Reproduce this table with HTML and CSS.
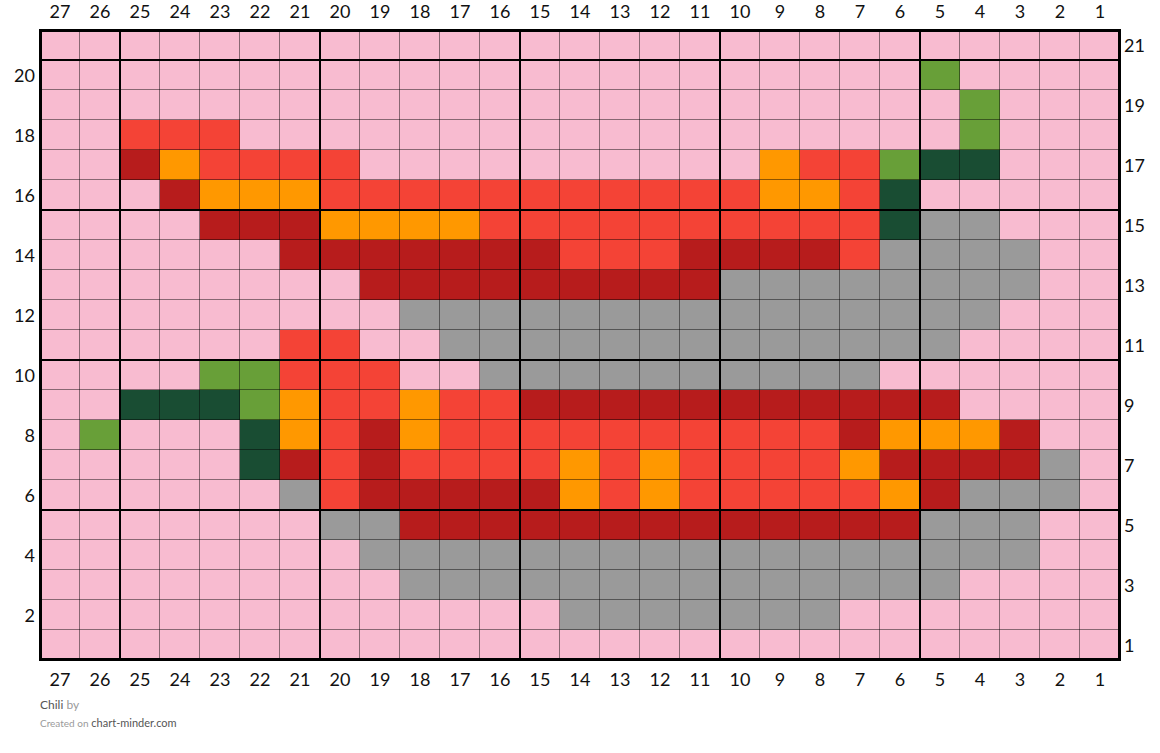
FILE: index.html
```html
<!DOCTYPE html>
<html lang="en">
<head>
<meta charset="utf-8">
<title>Chili</title>
<link rel="stylesheet" href="styles.css">
</head>
<body>
<div class="page">
  <div class="cols">
    <span>27</span><span>26</span><span>25</span><span>24</span><span>23</span><span>22</span><span>21</span><span>20</span><span>19</span><span>18</span><span>17</span><span>16</span><span>15</span><span>14</span><span>13</span><span>12</span><span>11</span><span>10</span><span>9</span><span>8</span><span>7</span><span>6</span><span>5</span><span>4</span><span>3</span><span>2</span><span>1</span>
  </div>
  <div class="middle">
    <div class="rows rows-left">
      <span></span><span>20</span><span></span><span>18</span><span></span><span>16</span><span></span><span>14</span><span></span><span>12</span><span></span><span>10</span><span></span><span>8</span><span></span><span>6</span><span></span><span>4</span><span></span><span>2</span><span></span>
    </div>
    <div class="chart">
<!-- 21 --><i class="p"></i><i class="p"></i><i class="p"></i><i class="p"></i><i class="p"></i><i class="p"></i><i class="p"></i><i class="p"></i><i class="p"></i><i class="p"></i><i class="p"></i><i class="p"></i><i class="p"></i><i class="p"></i><i class="p"></i><i class="p"></i><i class="p"></i><i class="p"></i><i class="p"></i><i class="p"></i><i class="p"></i><i class="p"></i><i class="p"></i><i class="p"></i><i class="p"></i><i class="p"></i><i class="p"></i>
<!-- 20 --><i class="p"></i><i class="p"></i><i class="p"></i><i class="p"></i><i class="p"></i><i class="p"></i><i class="p"></i><i class="p"></i><i class="p"></i><i class="p"></i><i class="p"></i><i class="p"></i><i class="p"></i><i class="p"></i><i class="p"></i><i class="p"></i><i class="p"></i><i class="p"></i><i class="p"></i><i class="p"></i><i class="p"></i><i class="p"></i><i class="l"></i><i class="p"></i><i class="p"></i><i class="p"></i><i class="p"></i>
<!-- 19 --><i class="p"></i><i class="p"></i><i class="p"></i><i class="p"></i><i class="p"></i><i class="p"></i><i class="p"></i><i class="p"></i><i class="p"></i><i class="p"></i><i class="p"></i><i class="p"></i><i class="p"></i><i class="p"></i><i class="p"></i><i class="p"></i><i class="p"></i><i class="p"></i><i class="p"></i><i class="p"></i><i class="p"></i><i class="p"></i><i class="p"></i><i class="l"></i><i class="p"></i><i class="p"></i><i class="p"></i>
<!-- 18 --><i class="p"></i><i class="p"></i><i class="r"></i><i class="r"></i><i class="r"></i><i class="p"></i><i class="p"></i><i class="p"></i><i class="p"></i><i class="p"></i><i class="p"></i><i class="p"></i><i class="p"></i><i class="p"></i><i class="p"></i><i class="p"></i><i class="p"></i><i class="p"></i><i class="p"></i><i class="p"></i><i class="p"></i><i class="p"></i><i class="p"></i><i class="l"></i><i class="p"></i><i class="p"></i><i class="p"></i>
<!-- 17 --><i class="p"></i><i class="p"></i><i class="d"></i><i class="o"></i><i class="r"></i><i class="r"></i><i class="r"></i><i class="r"></i><i class="p"></i><i class="p"></i><i class="p"></i><i class="p"></i><i class="p"></i><i class="p"></i><i class="p"></i><i class="p"></i><i class="p"></i><i class="p"></i><i class="o"></i><i class="r"></i><i class="r"></i><i class="l"></i><i class="k"></i><i class="k"></i><i class="p"></i><i class="p"></i><i class="p"></i>
<!-- 16 --><i class="p"></i><i class="p"></i><i class="p"></i><i class="d"></i><i class="o"></i><i class="o"></i><i class="o"></i><i class="r"></i><i class="r"></i><i class="r"></i><i class="r"></i><i class="r"></i><i class="r"></i><i class="r"></i><i class="r"></i><i class="r"></i><i class="r"></i><i class="r"></i><i class="o"></i><i class="o"></i><i class="r"></i><i class="k"></i><i class="p"></i><i class="p"></i><i class="p"></i><i class="p"></i><i class="p"></i>
<!-- 15 --><i class="p"></i><i class="p"></i><i class="p"></i><i class="p"></i><i class="d"></i><i class="d"></i><i class="d"></i><i class="o"></i><i class="o"></i><i class="o"></i><i class="o"></i><i class="r"></i><i class="r"></i><i class="r"></i><i class="r"></i><i class="r"></i><i class="r"></i><i class="r"></i><i class="r"></i><i class="r"></i><i class="r"></i><i class="k"></i><i class="g"></i><i class="g"></i><i class="p"></i><i class="p"></i><i class="p"></i>
<!-- 14 --><i class="p"></i><i class="p"></i><i class="p"></i><i class="p"></i><i class="p"></i><i class="p"></i><i class="d"></i><i class="d"></i><i class="d"></i><i class="d"></i><i class="d"></i><i class="d"></i><i class="d"></i><i class="r"></i><i class="r"></i><i class="r"></i><i class="d"></i><i class="d"></i><i class="d"></i><i class="d"></i><i class="r"></i><i class="g"></i><i class="g"></i><i class="g"></i><i class="g"></i><i class="p"></i><i class="p"></i>
<!-- 13 --><i class="p"></i><i class="p"></i><i class="p"></i><i class="p"></i><i class="p"></i><i class="p"></i><i class="p"></i><i class="p"></i><i class="d"></i><i class="d"></i><i class="d"></i><i class="d"></i><i class="d"></i><i class="d"></i><i class="d"></i><i class="d"></i><i class="d"></i><i class="g"></i><i class="g"></i><i class="g"></i><i class="g"></i><i class="g"></i><i class="g"></i><i class="g"></i><i class="g"></i><i class="p"></i><i class="p"></i>
<!-- 12 --><i class="p"></i><i class="p"></i><i class="p"></i><i class="p"></i><i class="p"></i><i class="p"></i><i class="p"></i><i class="p"></i><i class="p"></i><i class="g"></i><i class="g"></i><i class="g"></i><i class="g"></i><i class="g"></i><i class="g"></i><i class="g"></i><i class="g"></i><i class="g"></i><i class="g"></i><i class="g"></i><i class="g"></i><i class="g"></i><i class="g"></i><i class="g"></i><i class="p"></i><i class="p"></i><i class="p"></i>
<!-- 11 --><i class="p"></i><i class="p"></i><i class="p"></i><i class="p"></i><i class="p"></i><i class="p"></i><i class="r"></i><i class="r"></i><i class="p"></i><i class="p"></i><i class="g"></i><i class="g"></i><i class="g"></i><i class="g"></i><i class="g"></i><i class="g"></i><i class="g"></i><i class="g"></i><i class="g"></i><i class="g"></i><i class="g"></i><i class="g"></i><i class="g"></i><i class="p"></i><i class="p"></i><i class="p"></i><i class="p"></i>
<!-- 10 --><i class="p"></i><i class="p"></i><i class="p"></i><i class="p"></i><i class="l"></i><i class="l"></i><i class="r"></i><i class="r"></i><i class="r"></i><i class="p"></i><i class="p"></i><i class="g"></i><i class="g"></i><i class="g"></i><i class="g"></i><i class="g"></i><i class="g"></i><i class="g"></i><i class="g"></i><i class="g"></i><i class="g"></i><i class="p"></i><i class="p"></i><i class="p"></i><i class="p"></i><i class="p"></i><i class="p"></i>
<!-- 9 --><i class="p"></i><i class="p"></i><i class="k"></i><i class="k"></i><i class="k"></i><i class="l"></i><i class="o"></i><i class="r"></i><i class="r"></i><i class="o"></i><i class="r"></i><i class="r"></i><i class="d"></i><i class="d"></i><i class="d"></i><i class="d"></i><i class="d"></i><i class="d"></i><i class="d"></i><i class="d"></i><i class="d"></i><i class="d"></i><i class="d"></i><i class="p"></i><i class="p"></i><i class="p"></i><i class="p"></i>
<!-- 8 --><i class="p"></i><i class="l"></i><i class="p"></i><i class="p"></i><i class="p"></i><i class="k"></i><i class="o"></i><i class="r"></i><i class="d"></i><i class="o"></i><i class="r"></i><i class="r"></i><i class="r"></i><i class="r"></i><i class="r"></i><i class="r"></i><i class="r"></i><i class="r"></i><i class="r"></i><i class="r"></i><i class="d"></i><i class="o"></i><i class="o"></i><i class="o"></i><i class="d"></i><i class="p"></i><i class="p"></i>
<!-- 7 --><i class="p"></i><i class="p"></i><i class="p"></i><i class="p"></i><i class="p"></i><i class="k"></i><i class="d"></i><i class="r"></i><i class="d"></i><i class="r"></i><i class="r"></i><i class="r"></i><i class="r"></i><i class="o"></i><i class="r"></i><i class="o"></i><i class="r"></i><i class="r"></i><i class="r"></i><i class="r"></i><i class="o"></i><i class="d"></i><i class="d"></i><i class="d"></i><i class="d"></i><i class="g"></i><i class="p"></i>
<!-- 6 --><i class="p"></i><i class="p"></i><i class="p"></i><i class="p"></i><i class="p"></i><i class="p"></i><i class="g"></i><i class="r"></i><i class="d"></i><i class="d"></i><i class="d"></i><i class="d"></i><i class="d"></i><i class="o"></i><i class="r"></i><i class="o"></i><i class="r"></i><i class="r"></i><i class="r"></i><i class="r"></i><i class="r"></i><i class="o"></i><i class="d"></i><i class="g"></i><i class="g"></i><i class="g"></i><i class="p"></i>
<!-- 5 --><i class="p"></i><i class="p"></i><i class="p"></i><i class="p"></i><i class="p"></i><i class="p"></i><i class="p"></i><i class="g"></i><i class="g"></i><i class="d"></i><i class="d"></i><i class="d"></i><i class="d"></i><i class="d"></i><i class="d"></i><i class="d"></i><i class="d"></i><i class="d"></i><i class="d"></i><i class="d"></i><i class="d"></i><i class="d"></i><i class="g"></i><i class="g"></i><i class="g"></i><i class="p"></i><i class="p"></i>
<!-- 4 --><i class="p"></i><i class="p"></i><i class="p"></i><i class="p"></i><i class="p"></i><i class="p"></i><i class="p"></i><i class="p"></i><i class="g"></i><i class="g"></i><i class="g"></i><i class="g"></i><i class="g"></i><i class="g"></i><i class="g"></i><i class="g"></i><i class="g"></i><i class="g"></i><i class="g"></i><i class="g"></i><i class="g"></i><i class="g"></i><i class="g"></i><i class="g"></i><i class="g"></i><i class="p"></i><i class="p"></i>
<!-- 3 --><i class="p"></i><i class="p"></i><i class="p"></i><i class="p"></i><i class="p"></i><i class="p"></i><i class="p"></i><i class="p"></i><i class="p"></i><i class="g"></i><i class="g"></i><i class="g"></i><i class="g"></i><i class="g"></i><i class="g"></i><i class="g"></i><i class="g"></i><i class="g"></i><i class="g"></i><i class="g"></i><i class="g"></i><i class="g"></i><i class="g"></i><i class="p"></i><i class="p"></i><i class="p"></i><i class="p"></i>
<!-- 2 --><i class="p"></i><i class="p"></i><i class="p"></i><i class="p"></i><i class="p"></i><i class="p"></i><i class="p"></i><i class="p"></i><i class="p"></i><i class="p"></i><i class="p"></i><i class="p"></i><i class="p"></i><i class="g"></i><i class="g"></i><i class="g"></i><i class="g"></i><i class="g"></i><i class="g"></i><i class="g"></i><i class="p"></i><i class="p"></i><i class="p"></i><i class="p"></i><i class="p"></i><i class="p"></i><i class="p"></i>
<!-- 1 --><i class="p"></i><i class="p"></i><i class="p"></i><i class="p"></i><i class="p"></i><i class="p"></i><i class="p"></i><i class="p"></i><i class="p"></i><i class="p"></i><i class="p"></i><i class="p"></i><i class="p"></i><i class="p"></i><i class="p"></i><i class="p"></i><i class="p"></i><i class="p"></i><i class="p"></i><i class="p"></i><i class="p"></i><i class="p"></i><i class="p"></i><i class="p"></i><i class="p"></i><i class="p"></i><i class="p"></i>
    </div>
    <div class="rows rows-right">
      <span>21</span><span></span><span>19</span><span></span><span>17</span><span></span><span>15</span><span></span><span>13</span><span></span><span>11</span><span></span><span>9</span><span></span><span>7</span><span></span><span>5</span><span></span><span>3</span><span></span><span>1</span>
    </div>
  </div>
  <div class="cols cols-bottom">
    <span>27</span><span>26</span><span>25</span><span>24</span><span>23</span><span>22</span><span>21</span><span>20</span><span>19</span><span>18</span><span>17</span><span>16</span><span>15</span><span>14</span><span>13</span><span>12</span><span>11</span><span>10</span><span>9</span><span>8</span><span>7</span><span>6</span><span>5</span><span>4</span><span>3</span><span>2</span><span>1</span>
  </div>
  <div class="footer">
    <p class="title"><span class="strong">Chili</span> <span class="muted">by</span></p>
    <p class="credit"><span class="muted small">Created on</span> <span class="strong">chart-minder.com</span></p>
  </div>
</div>
</body>
</html>
```
FILE: styles.css
```css
html, body {
  margin: 0;
  padding: 0;
  background: #fff;
}

body {
  font-family: Lato, "Open Sans", sans-serif;
  color: #111;
}

.page {
  width: 1160px;
}

.cols {
  display: grid;
  grid-template-columns: repeat(27, 40px);
  margin-left: 40px;
  height: 30px;
  font-size: 18px;
  line-height: 22px;
  text-align: center;
}

.cols-bottom {
  margin-top: 8px;
  height: 23px;
}

.middle {
  display: flex;
}

.rows {
  width: 40px;
  display: grid;
  grid-template-rows: repeat(21, 30px);
  font-size: 18px;
  line-height: 30px;
}

.rows-left {
  text-align: right;
  padding-right: 5px;
  box-sizing: border-box;
}

.rows-right {
  text-align: left;
  padding-left: 4px;
  box-sizing: border-box;
}

.chart {
  position: relative;
  display: grid;
  grid-template-columns: repeat(27, 40px);
  grid-template-rows: repeat(21, 30px);
  width: 1080px;
  height: 630px;
}

.chart i {
  display: block;
}

.chart::before {
  content: "";
  position: absolute;
  inset: 0;
  pointer-events: none;
  background-image:
    linear-gradient(to right, #000 2px, transparent 2px),
    linear-gradient(to bottom, #000 2px, transparent 2px),
    linear-gradient(to right, rgba(0, 0, 0, 0.45) 1px, transparent 1px),
    linear-gradient(to bottom, rgba(0, 0, 0, 0.45) 1px, transparent 1px);
  background-size: 200px 100%, 100% 150px, 40px 100%, 100% 30px;
  background-position: 79px 0, 0 29px, -1px 0, 0 -1px;
}

.chart::after {
  content: "";
  position: absolute;
  inset: -1px;
  border: 3px solid #000;
  pointer-events: none;
}

.p { background: #f8bbd0; }
.r { background: #f44336; }
.d { background: #b71c1c; }
.o { background: #ff9800; }
.g { background: #9a9a9a; }
.l { background: #689f38; }
.k { background: #194d33; }

.footer {
  margin-left: 40px;
  margin-top: 5px;
}

.footer p {
  margin: 0;
  height: 18px;
  line-height: 18px;
  font-size: 12px;
}

.footer .credit {
  font-size: 11px;
}

.strong {
  color: #555;
}

.muted {
  color: #9a9a9a;
}

.small {
  font-size: 10px;
}
```
